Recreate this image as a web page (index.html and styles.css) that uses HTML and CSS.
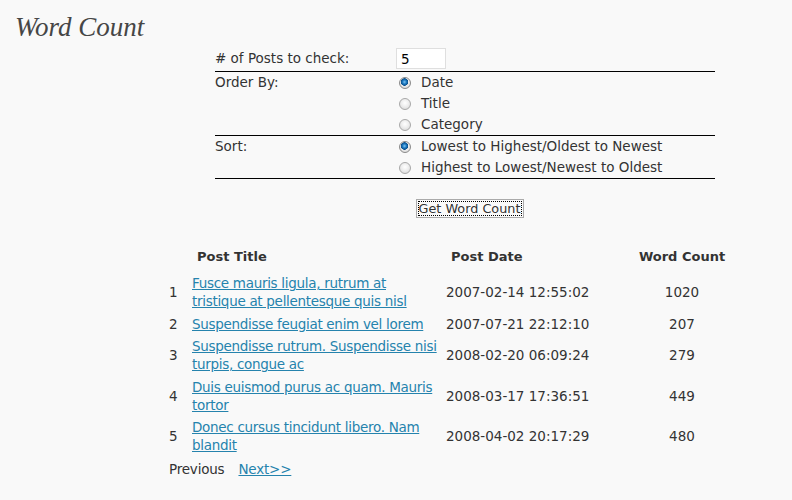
FILE: index.html
```html
<!DOCTYPE html>
<html>
<head>
<meta charset="utf-8">
<title>Word Count</title>
<link rel="stylesheet" href="styles.css">
</head>
<body>
<div class="wrap">
  <h2 class="page-title">Word Count</h2>
  <form class="options">
    <div class="opt-row row-posts">
      <div class="opt-label"># of Posts to check:</div>
      <div class="opt-value"><input class="num-input" type="text" value="5"></div>
    </div>
    <div class="opt-row">
      <div class="opt-label">Order By:</div>
      <div class="opt-value">
        <label class="radio-line"><input type="radio" name="order" checked><span>Date</span></label>
        <label class="radio-line"><input type="radio" name="order"><span>Title</span></label>
        <label class="radio-line"><input type="radio" name="order"><span>Category</span></label>
      </div>
    </div>
    <div class="opt-row">
      <div class="opt-label">Sort:</div>
      <div class="opt-value">
        <label class="radio-line"><input type="radio" name="sort" checked><span>Lowest to Highest/Oldest to Newest</span></label>
        <label class="radio-line"><input type="radio" name="sort"><span>Highest to Lowest/Newest to Oldest</span></label>
      </div>
    </div>
    <div class="submit-row">
      <button type="button" class="btn">Get Word Count</button>
    </div>
  </form>

  <table class="results">
    <colgroup>
      <col class="col-num">
      <col class="col-title">
      <col class="col-date">
      <col class="col-count">
    </colgroup>
    <thead>
      <tr>
        <th class="c-num"></th>
        <th class="c-title">Post Title</th>
        <th class="c-date">Post Date</th>
        <th class="c-count">Word Count</th>
      </tr>
    </thead>
    <tbody>
      <tr><td class="c-num">1</td><td class="c-title"><a href="#">Fusce mauris ligula, rutrum at tristique at pellentesque quis nisl</a></td><td class="c-date">2007-02-14 12:55:02</td><td class="c-count">1020</td></tr>
      <tr><td class="c-num">2</td><td class="c-title"><a href="#">Suspendisse feugiat enim vel lorem</a></td><td class="c-date">2007-07-21 22:12:10</td><td class="c-count">207</td></tr>
      <tr><td class="c-num">3</td><td class="c-title"><a href="#">Suspendisse rutrum. Suspendisse nisi turpis, congue ac</a></td><td class="c-date">2008-02-20 06:09:24</td><td class="c-count">279</td></tr>
      <tr><td class="c-num">4</td><td class="c-title"><a href="#">Duis euismod purus ac quam. Mauris tortor</a></td><td class="c-date">2008-03-17 17:36:51</td><td class="c-count">449</td></tr>
      <tr><td class="c-num">5</td><td class="c-title"><a href="#">Donec cursus tincidunt libero. Nam blandit</a></td><td class="c-date">2008-04-02 20:17:29</td><td class="c-count">480</td></tr>
    </tbody>
  </table>
  <div class="pager"><span class="prev">Previous</span><a href="#" class="next">Next&gt;&gt;</a></div>
</div>
</body>
</html>
```

FILE: styles.css
```css
html, body {
  margin: 0;
  padding: 0;
  background: #f9f9f9;
}
body {
  font-family: "DejaVu Sans", Verdana, sans-serif;
  font-size: 13.5px;
  color: #333333;
}
.wrap {
  padding: 0 15px;
}
.page-title {
  margin: 0;
  padding-top: 12px;
  font-family: "Liberation Serif", Georgia, serif;
  font-style: italic;
  font-weight: normal;
  font-size: 27px;
  line-height: 30px;
  color: #464646;
}
.options {
  width: 500px;
  margin: 5px 0 0 200px;
}
.opt-row {
  display: grid;
  grid-template-columns: 181px 1fr;
  border-bottom: 1px solid #000;
}
.row-posts {
  padding-top: 1px;
  padding-bottom: 2px;
}
.opt-label {
  line-height: 21px;
}
.opt-value {
  display: flex;
  flex-direction: column;
}
.num-input {
  box-sizing: border-box;
  width: 50px;
  height: 21px;
  margin: 0;
  padding: 0 4px;
  border: 1px solid #dfdfdf;
  background: #fff;
  font-family: "DejaVu Sans", Verdana, sans-serif;
  font-size: 13.5px;
  color: #000;
  outline: none;
}
.radio-line {
  display: flex;
  align-items: center;
  height: 21px;
  line-height: 21px;
}
.radio-line input {
  -webkit-appearance: none;
  appearance: none;
  box-sizing: border-box;
  width: 12px;
  height: 12px;
  margin: 0 10px 0 3px;
  border-radius: 50%;
  border: 1px solid #a8a8a8;
  background: radial-gradient(circle at 50% 40%, #ffffff 0%, #eeeeee 45%, #d4d4d4 100%);
}
.radio-line input:checked {
  border-color: #8a8a8a;
  background:
    radial-gradient(circle at 45% 40%, #7fc4f0 0px, #1b78c0 2px, #0b4f8a 3.5px, transparent 4px),
    radial-gradient(circle at 50% 40%, #ffffff 0%, #eeeeee 45%, #d4d4d4 100%);
}
.submit-row {
  display: flex;
  justify-content: center;
  padding-top: 20px;
}
.btn {
  box-sizing: border-box;
  width: 108px;
  height: 19px;
  padding: 0;
  margin-left: 9px;
  border: 1px solid #aaaaaa;
  background: #fafafa;
  font-family: "DejaVu Sans", Verdana, sans-serif;
  font-size: 12.8px;
  line-height: 15px;
  white-space: nowrap;
  color: #333;
  outline: 1px dotted #000;
  outline-offset: -3px;
}
.results {
  margin: 28px 0 0 151px;
  border-collapse: collapse;
  table-layout: fixed;
  width: 598px;
}
.col-num { width: 23px; }
.col-title { width: 254px; }
.col-date { width: 157px; }
.col-count { width: 164px; }
.results th {
  font-size: 13px;
  font-weight: bold;
  text-align: left;
  line-height: 18px;
  padding: 2px 3px 6px 8px;
}
.results td {
  line-height: 18px;
  padding: 2px 3px 2.5px;
  vertical-align: middle;
}
.results .c-count { text-align: center; }
.results th.c-count { padding-left: 3px; }
.results .c-title a {
  letter-spacing: -0.3px;
}
a {
  color: #2583ad;
  text-decoration: underline;
}
.pager {
  margin: 3px 0 0 154px;
  line-height: 18px;
}
.pager .prev {
  letter-spacing: -0.2px;
}
.pager .next {
  margin-left: 14px;
  letter-spacing: -0.2px;
}
```
